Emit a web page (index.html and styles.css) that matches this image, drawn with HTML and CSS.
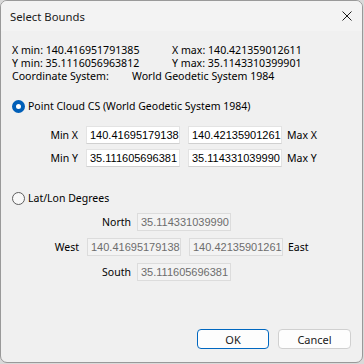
FILE: index.html
```html
<!DOCTYPE html>
<html>
<head>
<meta charset="utf-8">
<link rel="stylesheet" href="styles.css">
</head>
<body>
<div class="window">
  <div class="titlebar">
    <span class="title">Select Bounds</span>
    <svg class="close" width="10" height="10" viewBox="0 0 10 10"><path d="M0.5 0.5 L9.5 9.5 M9.5 0.5 L0.5 9.5" stroke="#1b1b1b" stroke-width="1" fill="none"/></svg>
  </div>
  <div class="content">
    <div class="info">
      <div class="info-row"><span class="c1">X min: 140.416951791385</span><span>X max: 140.421359012611</span></div>
      <div class="info-row"><span class="c1">Y min: 35.1116056963812</span><span>Y max: 35.1143310399901</span></div>
      <div class="info-row"><span class="c3">Coordinate System:</span><span>World Geodetic System 1984</span></div>
    </div>

    <label class="radio-row r1"><span class="radio checked"></span><span class="rlabel">Point Cloud CS (World Geodetic System 1984)</span></label>
    <div class="pc-grid">
      <div class="frow"><span class="lbl w65">Min X</span><span class="field">140.41695179138</span><span class="field f2">140.42135901261</span><span class="lbl after">Max X</span></div>
      <div class="frow"><span class="lbl w65">Min Y</span><span class="field">35.111605696381</span><span class="field f2">35.114331039990</span><span class="lbl after">Max Y</span></div>
    </div>

    <label class="radio-row r2"><span class="radio"></span><span class="rlabel">Lat/Lon Degrees</span></label>
    <div class="ll-grid">
      <div class="frow"><span class="lbl w118">North</span><span class="field dis">35.114331039990</span></div>
      <div class="frow"><span class="lbl w66">West</span><span class="field dis">140.41695179138</span><span class="field dis f2">140.42135901261</span><span class="lbl after">East</span></div>
      <div class="frow"><span class="lbl w118">South</span><span class="field dis">35.111605696381</span></div>
    </div>

    <div class="buttons">
      <button class="btn ok">OK</button>
      <button class="btn">Cancel</button>
    </div>
  </div>
</div>
</body>
</html>
```

FILE: styles.css
```css
* { box-sizing: border-box; }
html, body { margin: 0; padding: 0; }
body {
  width: 364px; height: 364px;
  background: #d9d9d9;
  font-family: "Noto Sans", "Open Sans", sans-serif;
  color: #000;
  overflow: hidden;
}
.window {
  width: 363px; height: 363px;
  background: #f0f0f0;
  border: 1px solid #999;
  border-radius: 7px;
  overflow: hidden;
  display: flex; flex-direction: column;
}
.titlebar {
  height: 30px;
  background: #f3f3f3;
  display: flex; align-items: center; justify-content: space-between;
  padding: 0 10px 0 9px;
  flex: none;
}
.title { font-size: 11.3px; color: #1a1a1a; margin-top: 1px; }
.content {
  padding: 13px 0 0 11px;
  display: flex; flex-direction: column;
  flex: 1;
}
.info { font-size: 10.6px; line-height: 13px; }
.info-row { display: flex; white-space: nowrap; }
.c1 { width: 160px; }
.c3 { width: 120px; }
.radio-row {
  display: flex; align-items: center;
  height: 16px;
  font-size: 10.5px;
}
.r1 { margin-top: 15px; }
.r2 { margin-top: 23px; }
.radio {
  width: 13px; height: 13px;
  border-radius: 50%;
  border: 1px solid #5e5e5e;
  background: #f8f8f8;
  margin-right: 3px;
  flex: none;
}
.radio.checked {
  border: 4px solid #005fb8;
  background: #fff;
}
.rlabel { white-space: nowrap; }
.pc-grid { margin-top: 12px; display: flex; flex-direction: column; gap: 5px; }
.ll-grid { margin-top: 7px; display: flex; flex-direction: column; gap: 7px; }
.frow { display: flex; align-items: center; height: 18px; }
.lbl { font-size: 10.5px; white-space: nowrap; }
.w65 { width: 66px; text-align: right; margin-right: 8px; }
.w66 { width: 67px; text-align: right; margin-right: 8px; }
.w118 { width: 119px; text-align: right; margin-right: 6px; }
.after { margin-left: 5px; }
.field {
  width: 94px; height: 18px;
  background: #fff;
  border: 1px solid #e3e3e3;
  border-bottom-color: #d0d0d0;
  font-family: "Liberation Sans", Arial, sans-serif;
  font-size: 11px;
  line-height: 16px;
  padding-left: 3px;
  overflow: hidden;
  white-space: nowrap;
}
.f2 { margin-left: 8px; }
.field.dis {
  background: #f3f3f3;
  border: 1px solid #dcdcdc;
  color: #6d6d6d;
}
.buttons {
  margin-top: 48px;
  display: flex; justify-content: flex-end;
  gap: 9px;
  padding-right: 11px;
}
.btn {
  width: 73px; height: 20px;
  background: #fdfdfd;
  border: 1px solid #d0d0d0;
  border-radius: 4px;
  font-family: "Noto Sans", sans-serif;
  font-size: 11px;
  color: #1a1a1a;
  padding: 0;
}
.btn.ok { border-color: #0067c0; width: 72px; }
```
